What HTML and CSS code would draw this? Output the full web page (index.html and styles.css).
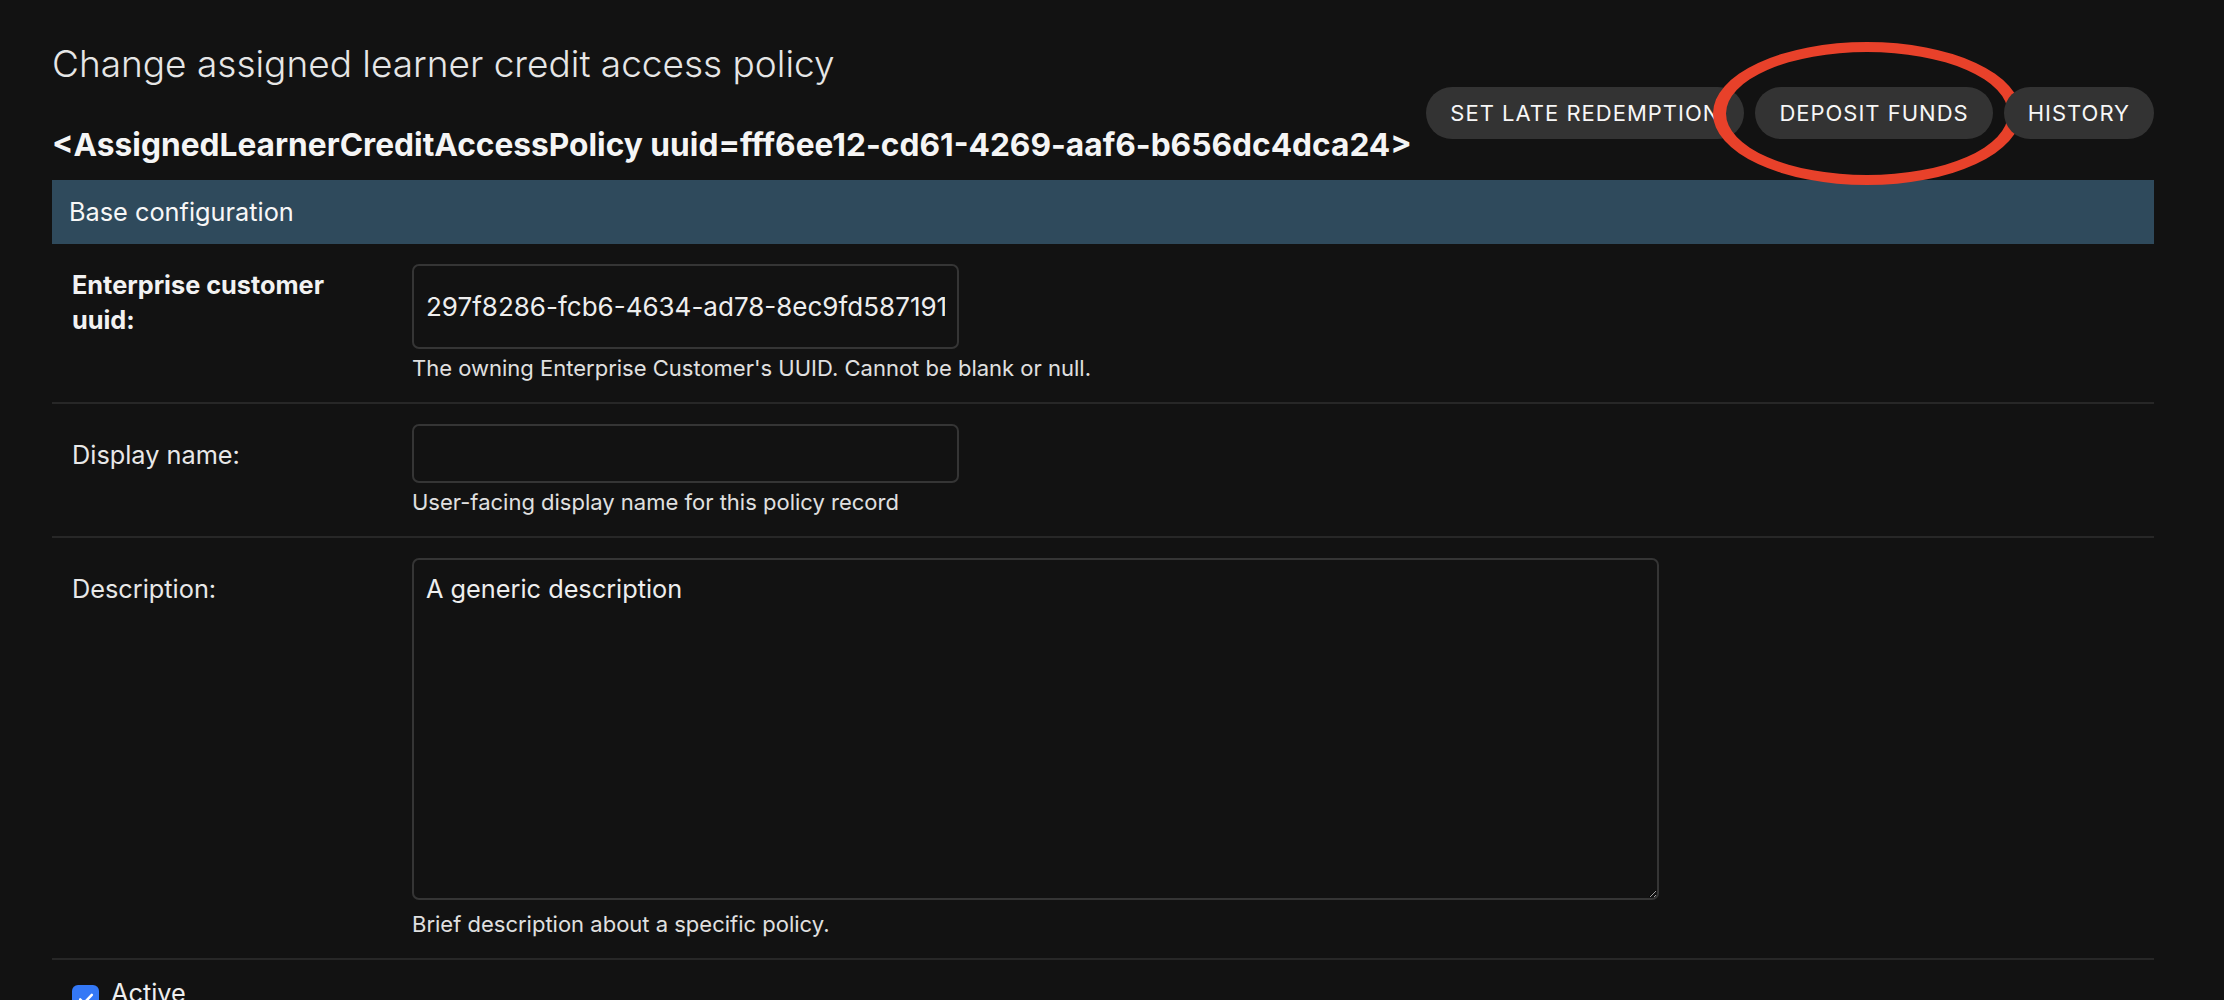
FILE: index.html
```html
<!DOCTYPE html>
<html lang="en">
<head>
<meta charset="utf-8">
<title>Change assigned learner credit access policy</title>
<link rel="stylesheet" href="styles.css">
</head>
<body>
<div class="content">
  <div class="head">
    <div class="titles">
      <h1 class="title">Change assigned learner credit access policy</h1>
      <h2 class="subtitle">&lt;AssignedLearnerCreditAccessPolicy uuid=fff6ee12-cd61-4269-aaf6-b656dc4dca24&gt;</h2>
    </div>
    <ul class="tools">
      <li class="tool-item"><a class="tool">Set late redemption</a></li>
      <li class="tool-item"><a class="tool">Deposit funds</a><span class="mark"></span></li>
      <li class="tool-item"><a class="tool">History</a></li>
    </ul>
  </div>

  <fieldset class="module">
    <h2 class="caption">Base configuration</h2>

    <div class="row">
      <label class="label label-strong">Enterprise customer uuid:</label>
      <div class="field">
        <input class="input input-tall" type="text" value="297f8286-fcb6-4634-ad78-8ec9fd587191">
        <div class="help">The owning Enterprise Customer's UUID. Cannot be blank or null.</div>
      </div>
    </div>

    <div class="row">
      <label class="label label-low">Display name:</label>
      <div class="field">
        <input class="input" type="text" value="">
        <div class="help">User-facing display name for this policy record</div>
      </div>
    </div>

    <div class="row">
      <label class="label label-low">Description:</label>
      <div class="field">
        <textarea class="textarea">A generic description</textarea>
        <div class="help help-after-area">Brief description about a specific policy.</div>
      </div>
    </div>

    <div class="row row-check">
      <span class="check"><svg viewBox="0 0 24 24" width="20" height="20"><path d="M5 12.5l4.5 4.5L19 7" fill="none" stroke="#fff" stroke-width="3" stroke-linecap="round" stroke-linejoin="round"/></svg></span>
      <label class="check-label">Active</label>
    </div>
  </fieldset>
</div>
</body>
</html>
```

FILE: styles.css
```css
* { box-sizing: border-box; }

html { color-scheme: dark; }

body {
  margin: 0;
  background: #121212;
  color: #eeeeee;
  font-family: Inter, "Noto Sans", sans-serif;
}

.content {
  padding: 40px 70px 0 52px;
}

.head {
  display: flex;
  justify-content: space-between;
  align-items: flex-start;
}

.titles { min-width: 0; }

.title {
  margin: 0;
  font-size: 37px;
  line-height: 48px;
  font-weight: 300;
  color: #e6e6e6;
  white-space: nowrap;
}

.subtitle {
  margin: 37px 0 0;
  font-size: 31.7px;
  line-height: 40px;
  font-weight: 700;
  color: #f5f5f5;
  white-space: nowrap;
}

.tools {
  list-style: none;
  margin: 47px 0 0;
  padding: 0;
  display: flex;
  gap: 11px;
  flex-shrink: 0;
}

.tool-item { position: relative; }

.tool {
  display: flex;
  align-items: center;
  height: 52px;
  padding: 0 24px;
  border-radius: 26px;
  background: #333333;
  color: #f7f7f7;
  font-size: 22px;
  letter-spacing: 1px;
  text-transform: uppercase;
  white-space: nowrap;
}

.mark {
  position: absolute;
  left: -42px;
  top: -45px;
  width: 308px;
  height: 143px;
  border: solid #e8412a;
  border-width: 10px 13px;
  border-radius: 50%;
  pointer-events: none;
}

.module {
  margin: 15px 0 0;
  padding: 0;
  border: none;
  min-width: 0;
}

.caption {
  margin: 0;
  height: 64px;
  padding: 0 17px;
  background: #2f4a5c;
  color: #f7f7f7;
  font-size: 25.3px;
  line-height: 64px;
  font-weight: 400;
}

.row {
  display: flex;
  align-items: flex-start;
  padding: 20px 20px;
  border-bottom: 2px solid #272727;
}

.label {
  width: 300px;
  margin-right: 40px;
  flex-shrink: 0;
  font-size: 25.3px;
  line-height: 35px;
  color: #e8e8e8;
}

.label-strong {
  font-weight: 700;
  padding-top: 3px;
  color: #f2f2f2;
}

.label-low { padding-top: 13px; }

.field {
  display: flex;
  flex-direction: column;
  align-items: flex-start;
}

.input {
  display: block;
  width: 547px;
  height: 59px;
  margin: 0;
  padding: 0 12px;
  background: #121212;
  border: 2px solid #353535;
  border-radius: 7px;
  color: #eeeeee;
  font-family: inherit;
  font-size: 26px;
  outline: none;
}

.input-tall { height: 85px; }

.textarea {
  display: block;
  width: 1247px;
  height: 342px;
  margin: 0;
  padding: 11px 12px;
  background: #121212;
  border: 2px solid #353535;
  border-radius: 7px;
  color: #eeeeee;
  font-family: inherit;
  font-size: 25.3px;
  line-height: 35px;
  resize: vertical;
  outline: none;
}

.help {
  margin-top: 5px;
  font-size: 22px;
  line-height: 28px;
  color: #e0e0e0;
}

.help-after-area { margin-top: 10px; }

.row-check {
  align-items: flex-start;
  padding-top: 15px;
  gap: 12px;
}

.check {
  width: 27px;
  height: 27px;
  margin-top: 10px;
  border-radius: 6px;
  background: #3478f6;
  display: flex;
  align-items: center;
  justify-content: center;
  flex-shrink: 0;
}

.check-label {
  font-size: 25.3px;
  line-height: 35px;
  color: #eeeeee;
}
```
